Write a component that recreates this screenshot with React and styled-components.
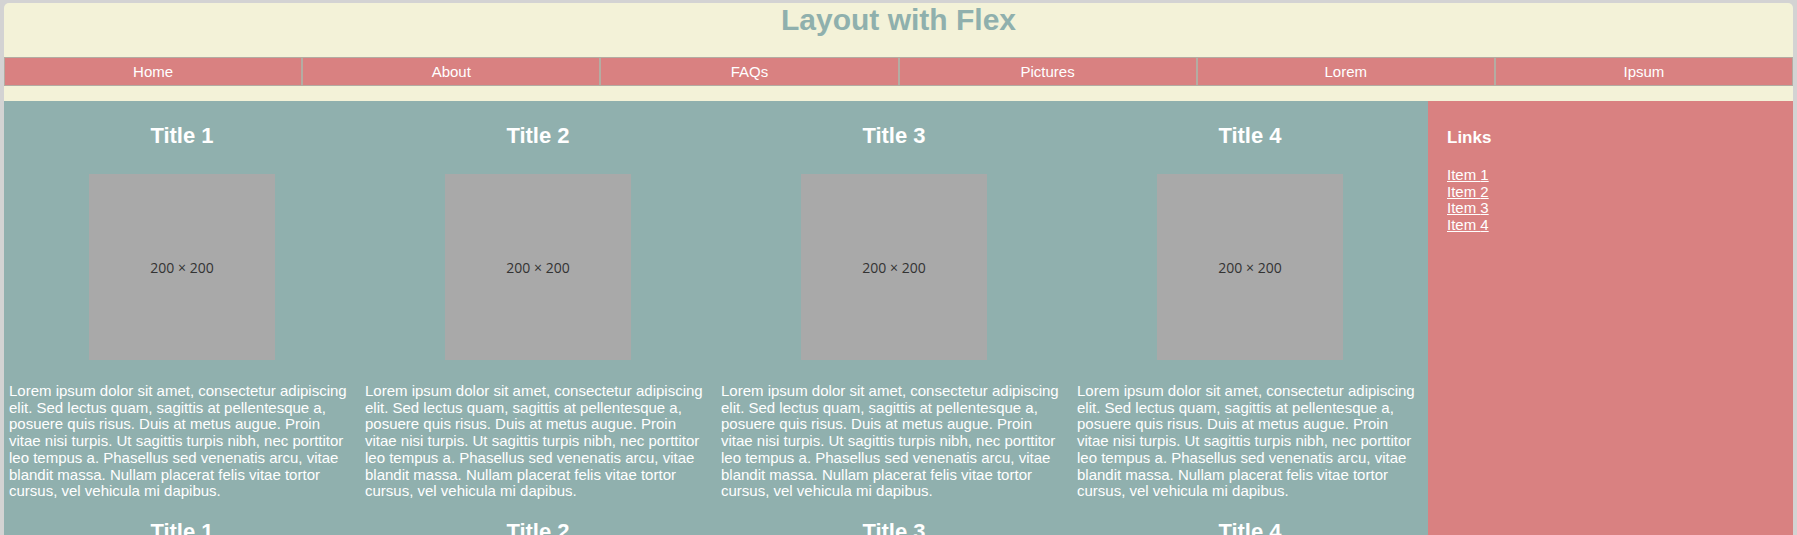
import React from "react";
import styled, { createGlobalStyle } from "styled-components";

const GlobalStyle = createGlobalStyle`
  html, body {
    margin: 0;
    padding: 0;
    background-color: #d3d3d3;
    font-family: "Liberation Sans", Arial, sans-serif;
  }
  body {
    padding: 3px 4px 0 4px;
    overflow: hidden;
  }
`;

const Container = styled.div`
  background-color: #f3f2d8;
  border-radius: 5px;
  overflow: hidden;
`;

const Header = styled.header`
  padding-bottom: 15px;
`;

const Title = styled.h1`
  margin: 0 0 21px 0;
  text-align: center;
  font-size: 30px;
  line-height: 33px;
  font-weight: bold;
  color: #8fb0ad;
`;

const Nav = styled.nav`
  display: flex;
`;

const NavItem = styled.a`
  flex: 1;
  background-color: #d98181;
  border: 1px solid #b4aca2;
  color: #ffffff;
  text-align: center;
  font-size: 15px;
  line-height: 27px;
  text-decoration: none;
`;

const Body = styled.div`
  display: flex;
  align-items: stretch;
`;

const Main = styled.main`
  flex: 1;
  display: flex;
  flex-wrap: wrap;
  align-content: flex-start;
  padding-top: 3px;
  background-color: #90b0ae;
`;

const Article = styled.article`
  flex: 0 0 25%;
  box-sizing: border-box;
  padding: 0 5px;
  color: #ffffff;
`;

const ArticleTitle = styled.h2`
  margin: 19px 0 26px 0;
  text-align: center;
  font-size: 22px;
  line-height: 25px;
  font-weight: bold;
`;

const Placeholder = styled.div`
  width: 186px;
  height: 186px;
  margin: 0 auto;
  background-color: #a9a9a9;
  display: flex;
  align-items: center;
  justify-content: center;
  color: #333333;
  font-family: "Open Sans", "Noto Sans", sans-serif;
  font-size: 14px;
`;

const Text = styled.p`
  margin: 23px 0 0 0;
  font-size: 15px;
  line-height: 16.7px;
`;

const Aside = styled.aside`
  width: 365px;
  flex: 0 0 365px;
  box-sizing: border-box;
  padding: 27px 19px;
  background-color: #d98181;
  color: #ffffff;
`;

const AsideTitle = styled.h3`
  margin: 0 0 19px 0;
  font-size: 17px;
  line-height: 20px;
  font-weight: bold;
`;

const LinkList = styled.ul`
  list-style: none;
  margin: 0;
  padding: 0;
`;

const LinkItem = styled.li`
  font-size: 15px;
  line-height: 16.7px;
`;

const Link = styled.a`
  color: #ffffff;
  text-decoration: underline;
`;

const navItems = ["Home", "About", "FAQs", "Pictures", "Lorem", "Ipsum"];
const lorem =
  "Lorem ipsum dolor sit amet, consectetur adipiscing elit. Sed lectus quam, sagittis at pellentesque a, posuere quis risus. Duis at metus augue. Proin vitae nisi turpis. Ut sagittis turpis nibh, nec porttitor leo tempus a. Phasellus sed venenatis arcu, vitae blandit massa. Nullam placerat felis vitae tortor cursus, vel vehicula mi dapibus.";
const articles = [1, 2, 3, 4, 1, 2, 3, 4];

const App = () => {
  return (
    <>
      <GlobalStyle />
      <Container>
        <Header>
          <Title>Layout with Flex</Title>
          <Nav>
            {navItems.map((item) => (
              <NavItem key={item} href="#">
                {item}
              </NavItem>
            ))}
          </Nav>
        </Header>
        <Body>
          <Main>
            {articles.map((n, i) => (
              <Article key={i}>
                <ArticleTitle>Title {n}</ArticleTitle>
                <Placeholder>200 × 200</Placeholder>
                <Text>{lorem}</Text>
              </Article>
            ))}
          </Main>
          <Aside>
            <AsideTitle>Links</AsideTitle>
            <LinkList>
              {[1, 2, 3, 4].map((n) => (
                <LinkItem key={n}>
                  <Link href="#">Item {n}</Link>
                </LinkItem>
              ))}
            </LinkList>
          </Aside>
        </Body>
      </Container>
    </>
  );
};

export default App;
